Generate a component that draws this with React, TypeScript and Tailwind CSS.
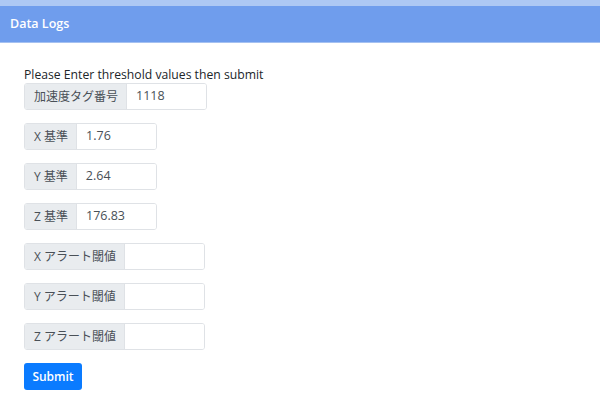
import React from "react";

const rows: { label: string; value: string }[] = [
  { label: "X 基準", value: "1.76" },
  { label: "Y 基準", value: "2.64" },
  { label: "Z 基準", value: "176.83" },
  { label: "X アラート閾値", value: "" },
  { label: "Y アラート閾値", value: "" },
  { label: "Z アラート閾値", value: "" },
];

function Group({ label, value }: { label: string; value: string }) {
  return (
    <div className="flex h-[27px] w-fit rounded-[3px] border border-[#dfe2e6] overflow-hidden">
      <div className="flex items-center bg-[#e9ecef] pl-[9px] pr-[8px] text-[12px] text-[#495057] border-r border-[#dfe2e6]">
        {label}
      </div>
      <div className="flex items-center w-[79px] bg-white pl-[9px] text-[12.5px] text-[#495057]">
        {value}
      </div>
    </div>
  );
}

export default function App() {
  return (
    <div
      className="w-[600px] h-[407px] bg-white"
      style={{ fontFamily: '"Open Sans", "Noto Sans CJK JP", sans-serif' }}
    >
      <div className="h-[6px] bg-[#adc8f4]" />
      <div className="h-[37px] bg-[#6f9ded] border-b border-[#a5c1f1] flex items-center pl-[10px]">
        <span className="text-white text-[12.5px] font-semibold">Data Logs</span>
      </div>
      <div className="pl-[24px] pt-[23px]">
        <div className="text-[12.2px] text-[#212529] leading-[17px]">
          Please Enter threshold values then submit
        </div>
        <div className="flex flex-col gap-[13px]">
          <Group label="加速度タグ番号" value="1118" />
          {rows.map((r) => (
            <Group key={r.label} label={r.label} value={r.value} />
          ))}
          <button className="w-[58px] h-[27px] rounded-[3px] bg-[#0a7bff] text-white text-[12px] font-semibold">
            Submit
          </button>
        </div>
      </div>
    </div>
  );
}
